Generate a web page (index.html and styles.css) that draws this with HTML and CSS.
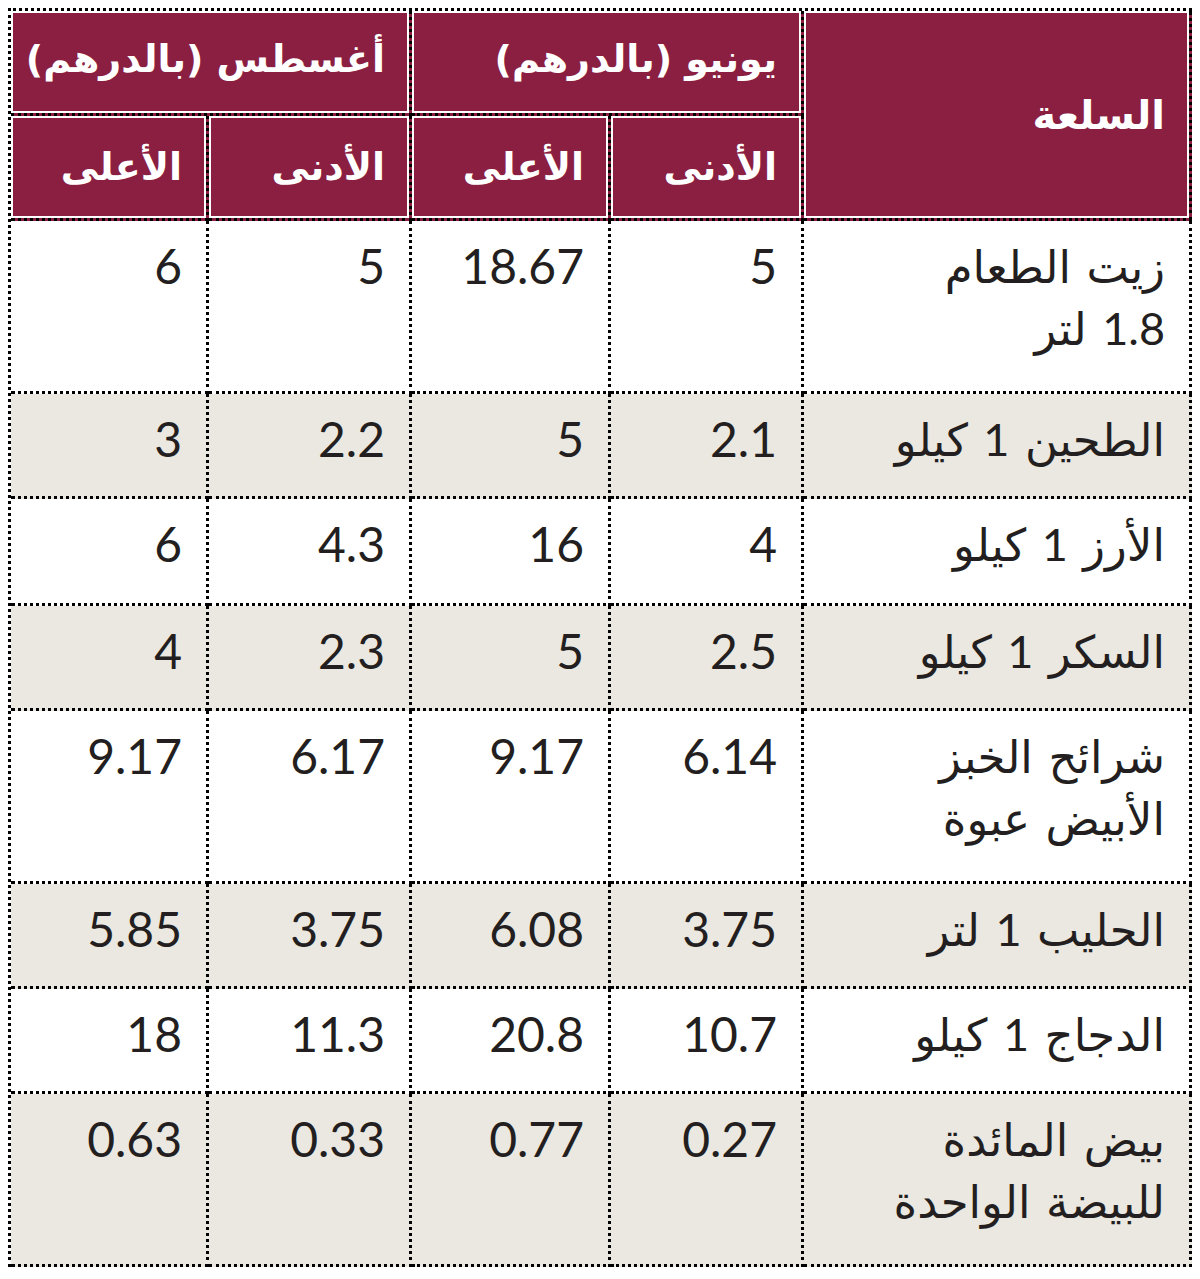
FILE: index.html
```html
<!DOCTYPE html>
<html lang="ar" dir="rtl">
<head>
<meta charset="utf-8">
<title>أسعار السلع</title>
<link rel="stylesheet" href="styles.css">
</head>
<body>
<table class="prices">
  <colgroup>
    <col class="c-name">
    <col class="c-jmin">
    <col class="c-jmax">
    <col class="c-amin">
    <col class="c-amax">
  </colgroup>
  <thead>
    <tr class="h1">
      <th rowspan="2" class="hname">السلعة</th>
      <th colspan="2">يونيو (بالدرهم)</th>
      <th colspan="2">أغسطس (بالدرهم)</th>
    </tr>
    <tr class="h2">
      <th>الأدنى</th>
      <th>الأعلى</th>
      <th>الأدنى</th>
      <th>الأعلى</th>
    </tr>
  </thead>
  <tbody>
    <tr class="tall">
      <td>زيت الطعام<br>1.8 لتر</td><td>5</td><td>18.67</td><td>5</td><td>6</td>
    </tr>
    <tr class="alt">
      <td>الطحين 1 كيلو</td><td>2.1</td><td>5</td><td>2.2</td><td>3</td>
    </tr>
    <tr class="r107">
      <td>الأرز 1 كيلو</td><td>4</td><td>16</td><td>4.3</td><td>6</td>
    </tr>
    <tr class="alt">
      <td>السكر 1 كيلو</td><td>2.5</td><td>5</td><td>2.3</td><td>4</td>
    </tr>
    <tr class="tall">
      <td>شرائح الخبز<br>الأبيض عبوة</td><td>6.14</td><td>9.17</td><td>6.17</td><td>9.17</td>
    </tr>
    <tr class="alt">
      <td>الحليب 1 لتر</td><td>3.75</td><td>6.08</td><td>3.75</td><td>5.85</td>
    </tr>
    <tr>
      <td>الدجاج 1 كيلو</td><td>10.7</td><td>20.8</td><td>11.3</td><td>18</td>
    </tr>
    <tr class="alt tall">
      <td>بيض المائدة<br>للبيضة الواحدة</td><td>0.27</td><td>0.77</td><td>0.33</td><td>0.63</td>
    </tr>
  </tbody>
</table>
</body>
</html>
```

FILE: styles.css
```css
html, body {
  background: #ffffff;
}
body {
  margin: 8px;
  font-family: Lato, "DejaVu Sans", sans-serif;
  color: #231f20;
}
.prices {
  table-layout: fixed;
  width: 1184px;
  border-collapse: separate;
  border-spacing: 0;
  border-top: 3px dotted #000000;
  border-left: 3px dotted #000000;
  direction: rtl;
}
.c-name { width: 388px; }
.c-jmin { width: 193px; }
.c-jmax { width: 199px; }
.c-amin { width: 203px; }
.c-amax { width: 198px; }

.prices th,
.prices td {
  border-right: 3px dotted #000000;
  border-bottom: 3px dotted #000000;
  text-align: right;
  padding: 0 24px 0 4px;
  box-sizing: border-box;
  white-space: nowrap;
}
.prices th {
  background: #8b1f41;
  color: #ffffff;
  font-family: "DejaVu Sans", sans-serif;
  font-weight: bold;
  font-size: 38px;
  box-shadow: inset 0 0 0 2px #ffffff;
  vertical-align: middle;
  height: 105px;
}
.h1 th { padding-bottom: 6px; }
.h2 th { padding-top: 0; }
.prices th.hname {
  padding-top: 6px;
  font-size: 40px;
}
.prices td {
  vertical-align: top;
  font-size: 48px;
  line-height: 62px;
  padding-top: 14px;
  height: 105px;
}
.prices td:first-child {
  font-size: 45px;
  word-spacing: 4px;
}
.prices tr.r107 td {
  height: 107px;
}
.prices tr.tall td {
  height: 173px;
}
.prices tr.alt td {
  background: #ebe7e1;
}
```
